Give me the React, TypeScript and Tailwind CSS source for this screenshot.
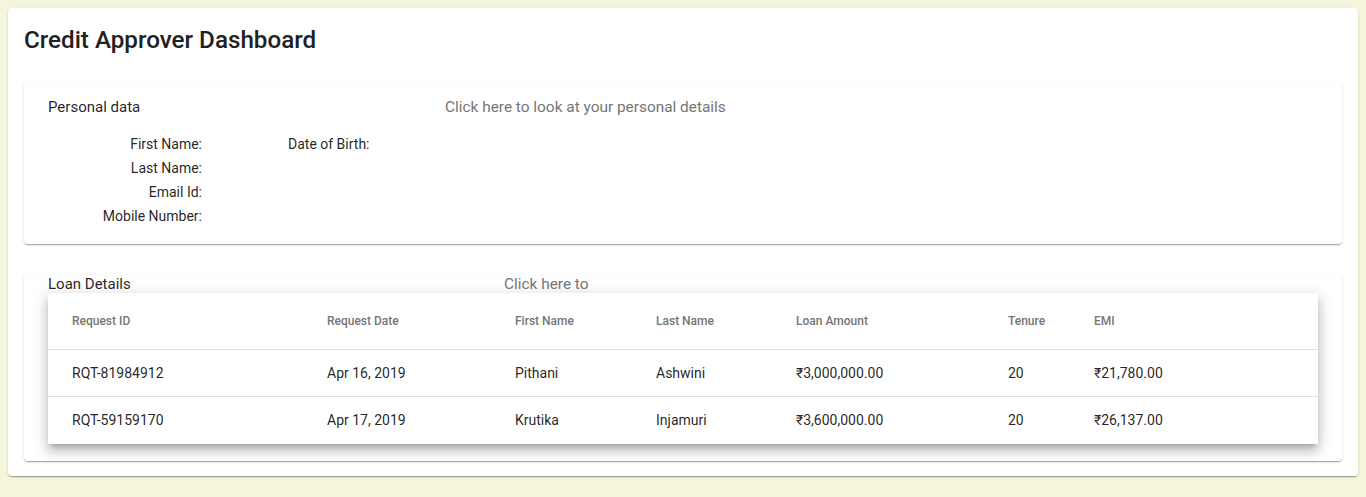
const labels = ["First Name:", "Last Name:", "Email Id:", "Mobile Number:"];

const loans = [
  {
    id: "RQT-81984912",
    date: "Apr 16, 2019",
    first: "Pithani",
    last: "Ashwini",
    amount: "₹3,000,000.00",
    tenure: "20",
    emi: "₹21,780.00",
  },
  {
    id: "RQT-59159170",
    date: "Apr 17, 2019",
    first: "Krutika",
    last: "Injamuri",
    amount: "₹3,600,000.00",
    tenure: "20",
    emi: "₹26,137.00",
  },
];

const cardShadow =
  "shadow-[0_2px_1px_-1px_rgba(0,0,0,0.2),0_1px_1px_0_rgba(0,0,0,0.14),0_1px_3px_0_rgba(0,0,0,0.12)]";

export default function App() {
  return (
    <div
      className="min-h-[497px] bg-[#f5f5dc] p-2"
      style={{ fontFamily: "Roboto, 'Liberation Sans', sans-serif" }}
    >
      <div className={`rounded bg-white px-4 pt-4 pb-[15px] ${cardShadow}`}>
        <h1 className="text-[24.2px] leading-8 font-medium text-[#212121]">
          Credit Approver Dashboard
        </h1>

        {/* Personal data */}
        <div className={`mt-[27px] rounded bg-white px-6 pt-[15px] pb-4 ${cardShadow}`}>
          <div className="flex text-[15px] leading-[18px]">
            <div className="w-[397px] text-black/[0.87]">Personal data</div>
            <div className="text-[15.4px] text-[#757575]">
              Click here to look at your personal details
            </div>
          </div>
          <div className="mt-4 flex text-sm leading-6 text-black/[0.87]">
            <div className="w-[154px] text-right">
              {labels.map((l) => (
                <div key={l}>{l}</div>
              ))}
            </div>
            <div className="ml-[86px]">Date of Birth:</div>
          </div>
        </div>

        {/* Loan details */}
        <div className={`mt-[31px] rounded bg-white px-6 pb-[17px] ${cardShadow}`}>
          <div className="flex text-[15px] leading-[18px]">
            <div className="w-[456px] text-black/[0.87]">Loan Details</div>
            <div className="text-[15.4px] text-[#757575]">Click here to</div>
          </div>
          <table className="w-full table-fixed border-collapse bg-white shadow-[0_5px_5px_-3px_rgba(0,0,0,0.2),0_8px_10px_1px_rgba(0,0,0,0.14),0_3px_14px_2px_rgba(0,0,0,0.12)]">
            <colgroup>
              <col className="w-[279px]" />
              <col className="w-[188px]" />
              <col className="w-[141px]" />
              <col className="w-[140px]" />
              <col className="w-[212px]" />
              <col className="w-[86px]" />
              <col />
            </colgroup>
            <thead>
              <tr className="h-14 border-b border-[#e0e0e0] text-left text-xs font-medium text-[#757575]">
                <th className="pl-6 font-medium">Request ID</th>
                <th className="font-medium">Request Date</th>
                <th className="font-medium">First Name</th>
                <th className="font-medium">Last Name</th>
                <th className="font-medium">Loan Amount</th>
                <th className="font-medium">Tenure</th>
                <th className="pr-6 font-medium">EMI</th>
              </tr>
            </thead>
            <tbody>
              {loans.map((r, i) => (
                <tr
                  key={r.id}
                  className={`text-sm text-black/[0.87] ${i < loans.length - 1 ? "h-[47px] border-b border-[#e0e0e0]" : "h-12"}`}
                >
                  <td className="pl-6">{r.id}</td>
                  <td>{r.date}</td>
                  <td>{r.first}</td>
                  <td>{r.last}</td>
                  <td>{r.amount}</td>
                  <td>{r.tenure}</td>
                  <td className="pr-6">{r.emi}</td>
                </tr>
              ))}
            </tbody>
          </table>
        </div>
      </div>
    </div>
  );
}
